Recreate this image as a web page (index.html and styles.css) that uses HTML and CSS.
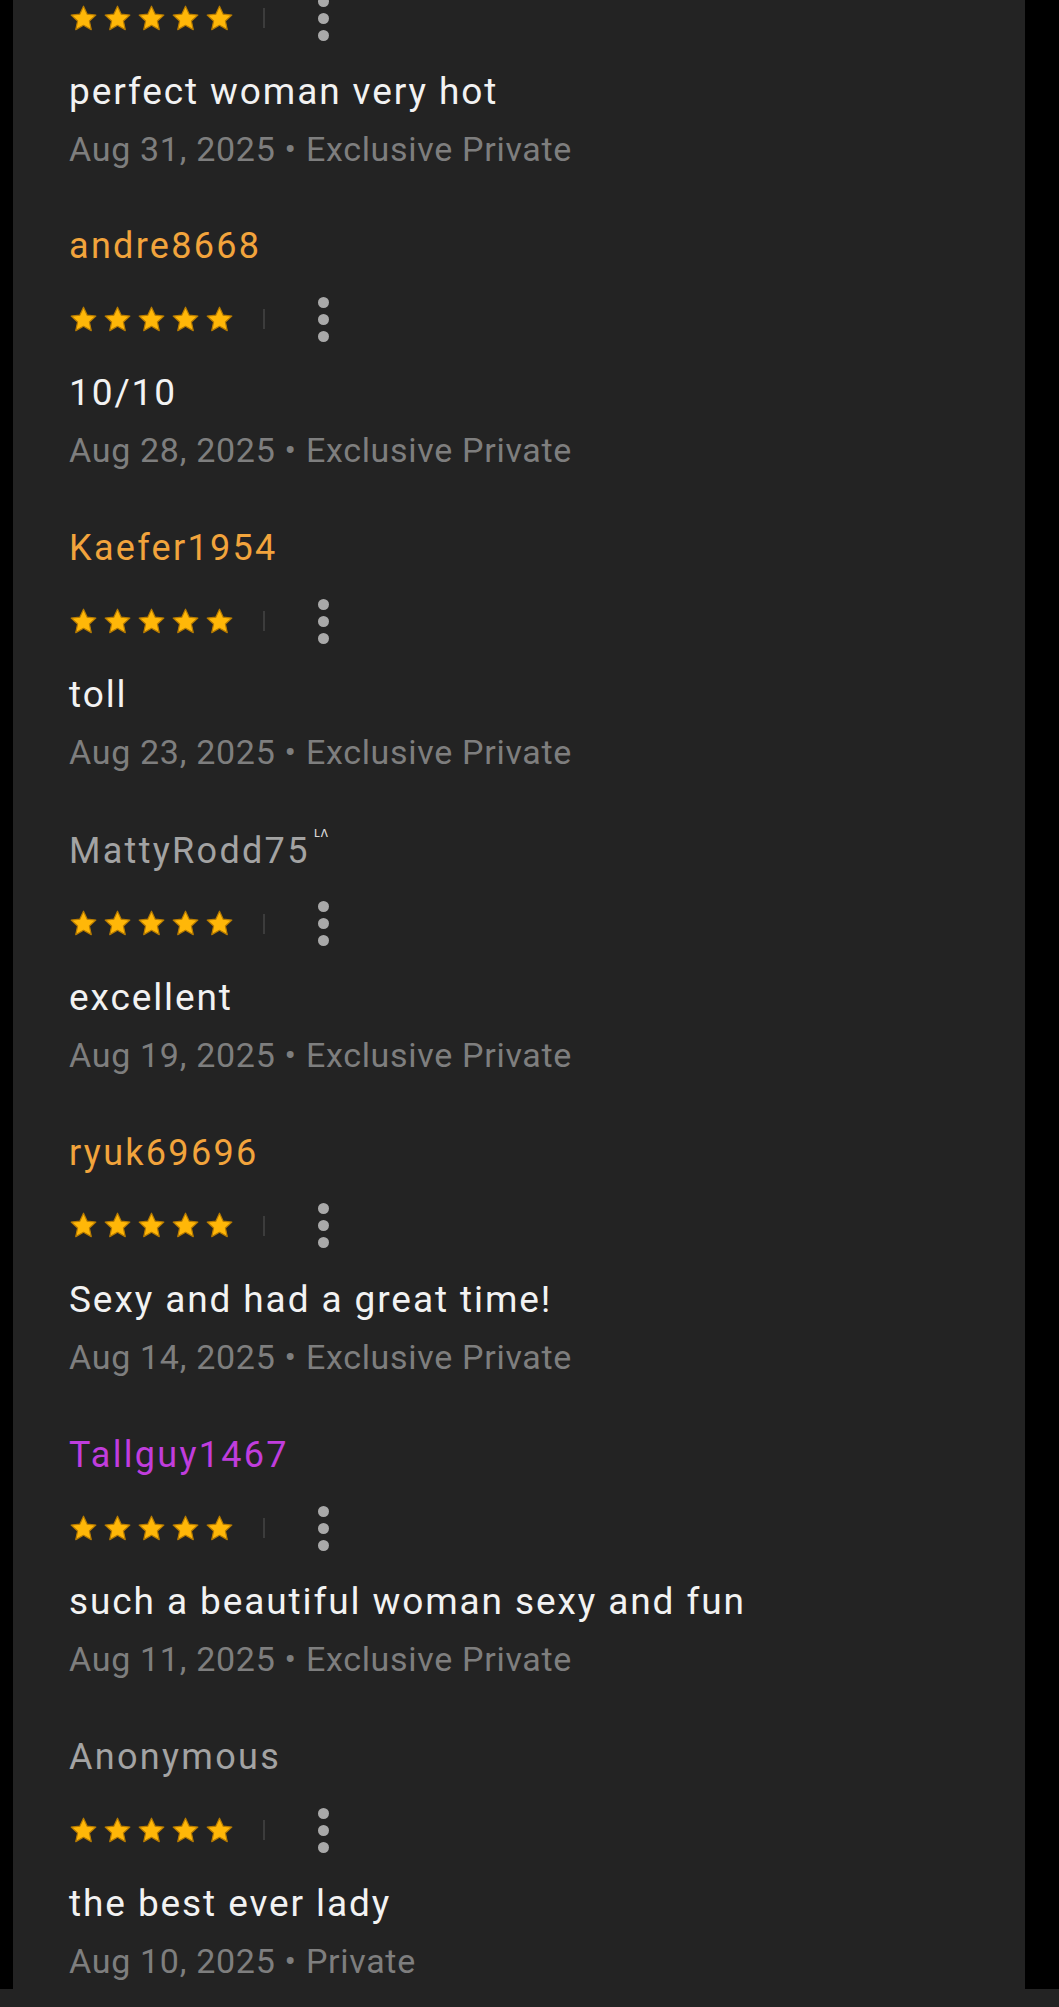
FILE: index.html
```html
<!DOCTYPE html>
<html lang="en">
<head>
<meta charset="utf-8">
<title>Reviews</title>
<link rel="stylesheet" href="styles.css">
</head>
<body>
<div class="screen">
  <main class="panel">
    <div class="list">
      <section class="review review-first">
        <div class="rating">
          <div class="stars">
            <svg class="star" viewBox="0 0 24 24"><path d="M12 1.8l3.1 6.6 7.1.8-5.3 4.9 1.5 7.1L12 17.6l-6.4 3.6 1.5-7.1L1.8 9.2l7.1-.8z"/></svg>
            <svg class="star" viewBox="0 0 24 24"><path d="M12 1.8l3.1 6.6 7.1.8-5.3 4.9 1.5 7.1L12 17.6l-6.4 3.6 1.5-7.1L1.8 9.2l7.1-.8z"/></svg>
            <svg class="star" viewBox="0 0 24 24"><path d="M12 1.8l3.1 6.6 7.1.8-5.3 4.9 1.5 7.1L12 17.6l-6.4 3.6 1.5-7.1L1.8 9.2l7.1-.8z"/></svg>
            <svg class="star" viewBox="0 0 24 24"><path d="M12 1.8l3.1 6.6 7.1.8-5.3 4.9 1.5 7.1L12 17.6l-6.4 3.6 1.5-7.1L1.8 9.2l7.1-.8z"/></svg>
            <svg class="star" viewBox="0 0 24 24"><path d="M12 1.8l3.1 6.6 7.1.8-5.3 4.9 1.5 7.1L12 17.6l-6.4 3.6 1.5-7.1L1.8 9.2l7.1-.8z"/></svg>
          </div>
          <span class="divider"></span>
          <button class="kebab" aria-label="More"><span></span><span></span><span></span></button>
        </div>
        <p class="text">perfect woman very hot</p>
        <p class="meta">Aug 31, 2025 • Exclusive Private</p>
      </section>

      <section class="review">
        <div class="name name-orange">andre8668</div>
        <div class="rating">
          <div class="stars">
            <svg class="star" viewBox="0 0 24 24"><path d="M12 1.8l3.1 6.6 7.1.8-5.3 4.9 1.5 7.1L12 17.6l-6.4 3.6 1.5-7.1L1.8 9.2l7.1-.8z"/></svg>
            <svg class="star" viewBox="0 0 24 24"><path d="M12 1.8l3.1 6.6 7.1.8-5.3 4.9 1.5 7.1L12 17.6l-6.4 3.6 1.5-7.1L1.8 9.2l7.1-.8z"/></svg>
            <svg class="star" viewBox="0 0 24 24"><path d="M12 1.8l3.1 6.6 7.1.8-5.3 4.9 1.5 7.1L12 17.6l-6.4 3.6 1.5-7.1L1.8 9.2l7.1-.8z"/></svg>
            <svg class="star" viewBox="0 0 24 24"><path d="M12 1.8l3.1 6.6 7.1.8-5.3 4.9 1.5 7.1L12 17.6l-6.4 3.6 1.5-7.1L1.8 9.2l7.1-.8z"/></svg>
            <svg class="star" viewBox="0 0 24 24"><path d="M12 1.8l3.1 6.6 7.1.8-5.3 4.9 1.5 7.1L12 17.6l-6.4 3.6 1.5-7.1L1.8 9.2l7.1-.8z"/></svg>
          </div>
          <span class="divider"></span>
          <button class="kebab" aria-label="More"><span></span><span></span><span></span></button>
        </div>
        <p class="text">10/10</p>
        <p class="meta">Aug 28, 2025 • Exclusive Private</p>
      </section>

      <section class="review">
        <div class="name name-orange">Kaefer1954</div>
        <div class="rating">
          <div class="stars">
            <svg class="star" viewBox="0 0 24 24"><path d="M12 1.8l3.1 6.6 7.1.8-5.3 4.9 1.5 7.1L12 17.6l-6.4 3.6 1.5-7.1L1.8 9.2l7.1-.8z"/></svg>
            <svg class="star" viewBox="0 0 24 24"><path d="M12 1.8l3.1 6.6 7.1.8-5.3 4.9 1.5 7.1L12 17.6l-6.4 3.6 1.5-7.1L1.8 9.2l7.1-.8z"/></svg>
            <svg class="star" viewBox="0 0 24 24"><path d="M12 1.8l3.1 6.6 7.1.8-5.3 4.9 1.5 7.1L12 17.6l-6.4 3.6 1.5-7.1L1.8 9.2l7.1-.8z"/></svg>
            <svg class="star" viewBox="0 0 24 24"><path d="M12 1.8l3.1 6.6 7.1.8-5.3 4.9 1.5 7.1L12 17.6l-6.4 3.6 1.5-7.1L1.8 9.2l7.1-.8z"/></svg>
            <svg class="star" viewBox="0 0 24 24"><path d="M12 1.8l3.1 6.6 7.1.8-5.3 4.9 1.5 7.1L12 17.6l-6.4 3.6 1.5-7.1L1.8 9.2l7.1-.8z"/></svg>
          </div>
          <span class="divider"></span>
          <button class="kebab" aria-label="More"><span></span><span></span><span></span></button>
        </div>
        <p class="text">toll</p>
        <p class="meta">Aug 23, 2025 • Exclusive Private</p>
      </section>

      <section class="review">
        <div class="name name-gray">MattyRodd75<span class="badge">ʟʌ</span></div>
        <div class="rating">
          <div class="stars">
            <svg class="star" viewBox="0 0 24 24"><path d="M12 1.8l3.1 6.6 7.1.8-5.3 4.9 1.5 7.1L12 17.6l-6.4 3.6 1.5-7.1L1.8 9.2l7.1-.8z"/></svg>
            <svg class="star" viewBox="0 0 24 24"><path d="M12 1.8l3.1 6.6 7.1.8-5.3 4.9 1.5 7.1L12 17.6l-6.4 3.6 1.5-7.1L1.8 9.2l7.1-.8z"/></svg>
            <svg class="star" viewBox="0 0 24 24"><path d="M12 1.8l3.1 6.6 7.1.8-5.3 4.9 1.5 7.1L12 17.6l-6.4 3.6 1.5-7.1L1.8 9.2l7.1-.8z"/></svg>
            <svg class="star" viewBox="0 0 24 24"><path d="M12 1.8l3.1 6.6 7.1.8-5.3 4.9 1.5 7.1L12 17.6l-6.4 3.6 1.5-7.1L1.8 9.2l7.1-.8z"/></svg>
            <svg class="star" viewBox="0 0 24 24"><path d="M12 1.8l3.1 6.6 7.1.8-5.3 4.9 1.5 7.1L12 17.6l-6.4 3.6 1.5-7.1L1.8 9.2l7.1-.8z"/></svg>
          </div>
          <span class="divider"></span>
          <button class="kebab" aria-label="More"><span></span><span></span><span></span></button>
        </div>
        <p class="text">excellent</p>
        <p class="meta">Aug 19, 2025 • Exclusive Private</p>
      </section>

      <section class="review">
        <div class="name name-orange">ryuk69696</div>
        <div class="rating">
          <div class="stars">
            <svg class="star" viewBox="0 0 24 24"><path d="M12 1.8l3.1 6.6 7.1.8-5.3 4.9 1.5 7.1L12 17.6l-6.4 3.6 1.5-7.1L1.8 9.2l7.1-.8z"/></svg>
            <svg class="star" viewBox="0 0 24 24"><path d="M12 1.8l3.1 6.6 7.1.8-5.3 4.9 1.5 7.1L12 17.6l-6.4 3.6 1.5-7.1L1.8 9.2l7.1-.8z"/></svg>
            <svg class="star" viewBox="0 0 24 24"><path d="M12 1.8l3.1 6.6 7.1.8-5.3 4.9 1.5 7.1L12 17.6l-6.4 3.6 1.5-7.1L1.8 9.2l7.1-.8z"/></svg>
            <svg class="star" viewBox="0 0 24 24"><path d="M12 1.8l3.1 6.6 7.1.8-5.3 4.9 1.5 7.1L12 17.6l-6.4 3.6 1.5-7.1L1.8 9.2l7.1-.8z"/></svg>
            <svg class="star" viewBox="0 0 24 24"><path d="M12 1.8l3.1 6.6 7.1.8-5.3 4.9 1.5 7.1L12 17.6l-6.4 3.6 1.5-7.1L1.8 9.2l7.1-.8z"/></svg>
          </div>
          <span class="divider"></span>
          <button class="kebab" aria-label="More"><span></span><span></span><span></span></button>
        </div>
        <p class="text">Sexy and had a great time!</p>
        <p class="meta">Aug 14, 2025 • Exclusive Private</p>
      </section>

      <section class="review">
        <div class="name name-purple">Tallguy1467</div>
        <div class="rating">
          <div class="stars">
            <svg class="star" viewBox="0 0 24 24"><path d="M12 1.8l3.1 6.6 7.1.8-5.3 4.9 1.5 7.1L12 17.6l-6.4 3.6 1.5-7.1L1.8 9.2l7.1-.8z"/></svg>
            <svg class="star" viewBox="0 0 24 24"><path d="M12 1.8l3.1 6.6 7.1.8-5.3 4.9 1.5 7.1L12 17.6l-6.4 3.6 1.5-7.1L1.8 9.2l7.1-.8z"/></svg>
            <svg class="star" viewBox="0 0 24 24"><path d="M12 1.8l3.1 6.6 7.1.8-5.3 4.9 1.5 7.1L12 17.6l-6.4 3.6 1.5-7.1L1.8 9.2l7.1-.8z"/></svg>
            <svg class="star" viewBox="0 0 24 24"><path d="M12 1.8l3.1 6.6 7.1.8-5.3 4.9 1.5 7.1L12 17.6l-6.4 3.6 1.5-7.1L1.8 9.2l7.1-.8z"/></svg>
            <svg class="star" viewBox="0 0 24 24"><path d="M12 1.8l3.1 6.6 7.1.8-5.3 4.9 1.5 7.1L12 17.6l-6.4 3.6 1.5-7.1L1.8 9.2l7.1-.8z"/></svg>
          </div>
          <span class="divider"></span>
          <button class="kebab" aria-label="More"><span></span><span></span><span></span></button>
        </div>
        <p class="text">such a beautiful woman sexy and fun</p>
        <p class="meta">Aug 11, 2025 • Exclusive Private</p>
      </section>

      <section class="review">
        <div class="name name-gray">Anonymous</div>
        <div class="rating">
          <div class="stars">
            <svg class="star" viewBox="0 0 24 24"><path d="M12 1.8l3.1 6.6 7.1.8-5.3 4.9 1.5 7.1L12 17.6l-6.4 3.6 1.5-7.1L1.8 9.2l7.1-.8z"/></svg>
            <svg class="star" viewBox="0 0 24 24"><path d="M12 1.8l3.1 6.6 7.1.8-5.3 4.9 1.5 7.1L12 17.6l-6.4 3.6 1.5-7.1L1.8 9.2l7.1-.8z"/></svg>
            <svg class="star" viewBox="0 0 24 24"><path d="M12 1.8l3.1 6.6 7.1.8-5.3 4.9 1.5 7.1L12 17.6l-6.4 3.6 1.5-7.1L1.8 9.2l7.1-.8z"/></svg>
            <svg class="star" viewBox="0 0 24 24"><path d="M12 1.8l3.1 6.6 7.1.8-5.3 4.9 1.5 7.1L12 17.6l-6.4 3.6 1.5-7.1L1.8 9.2l7.1-.8z"/></svg>
            <svg class="star" viewBox="0 0 24 24"><path d="M12 1.8l3.1 6.6 7.1.8-5.3 4.9 1.5 7.1L12 17.6l-6.4 3.6 1.5-7.1L1.8 9.2l7.1-.8z"/></svg>
          </div>
          <span class="divider"></span>
          <button class="kebab" aria-label="More"><span></span><span></span><span></span></button>
        </div>
        <p class="text">the best ever lady</p>
        <p class="meta">Aug 10, 2025 • Private</p>
      </section>
    </div>
  </main>
  <div class="footer-strip"></div>
</div>
</body>
</html>
```

FILE: styles.css
```css
* { box-sizing: border-box; }

html, body {
  margin: 0;
  padding: 0;
  background: #000;
}

body {
  font-family: Roboto, "Noto Sans", "Liberation Sans", sans-serif;
}

.screen {
  width: 1059px;
  height: 2007px;
  display: flex;
  flex-direction: column;
  background: #000;
  overflow: hidden;
}

.panel {
  margin-left: 13px;
  width: 1012px;
  height: 1989px;
  flex: none;
  background: #232323;
  overflow: hidden;
  padding-left: 56px;
}

.footer-strip {
  flex: 1;
  background: #232323;
}

.list {
  display: flex;
  flex-direction: column;
  margin-top: -7px;
}

.review {
  display: flex;
  flex-direction: column;
  height: 302.3px;
  flex: none;
}

.review-first {
  height: 231px;
}

.review-first .rating {
  margin-top: 0;
}

.name {
  font-size: 36px;
  line-height: 44px;
  height: 44px;
  letter-spacing: 2.3px;
  white-space: nowrap;
}

.name-orange { color: #f2a43c; }
.name-purple { color: #c03ddd; }
.name-gray { color: #a3a3a3; }

.badge {
  display: inline-block;
  vertical-align: top;
  font-size: 14px;
  line-height: 12px;
  color: #d8d8d8;
  margin-left: 4px;
  margin-top: -3px;
  letter-spacing: 1px;
}

.rating {
  margin-top: 26px;
  height: 50px;
  display: flex;
  align-items: center;
}

.stars {
  display: flex;
  gap: 5px;
}

.star {
  width: 29px;
  height: 29px;
  display: block;
}

.star path {
  fill: #ffb708;
  stroke: #b87c00;
  stroke-width: 1;
  stroke-linejoin: round;
}

.divider {
  width: 2px;
  height: 20px;
  background: #3c3c3c;
  margin-left: 29px;
}

.kebab {
  width: 48px;
  height: 50px;
  margin-left: 34px;
  padding: 0;
  border: 0;
  background: transparent;
  display: flex;
  flex-direction: column;
  align-items: center;
  justify-content: center;
  gap: 6px;
}

.kebab span {
  width: 11px;
  height: 11px;
  border-radius: 50%;
  background: #a9a9a9;
  display: block;
}

.text {
  margin: 26px 0 0;
  font-size: 37px;
  line-height: 46px;
  letter-spacing: 1.9px;
  color: #f2f2f2;
  white-space: nowrap;
}

.meta {
  margin: 12px 0 0;
  font-size: 34px;
  line-height: 44px;
  letter-spacing: 0.7px;
  color: #7e7e7e;
  white-space: nowrap;
}
```
